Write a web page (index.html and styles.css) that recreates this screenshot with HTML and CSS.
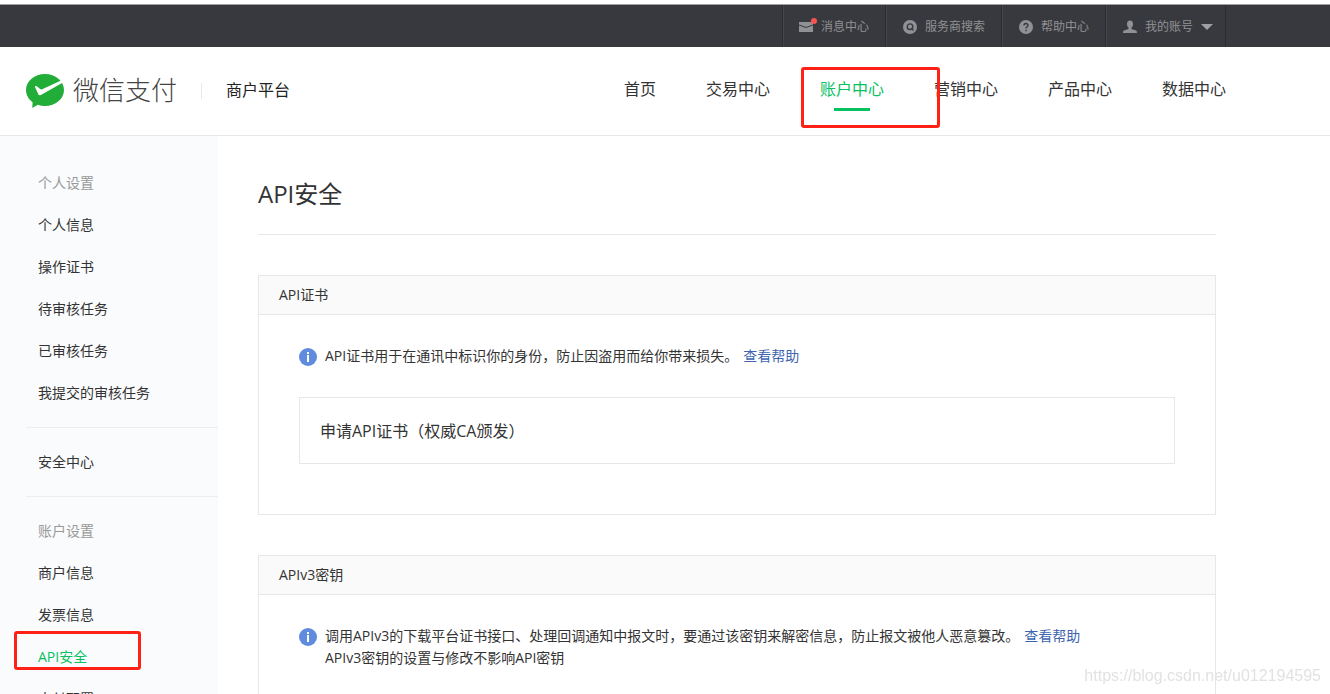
FILE: index.html
```html
<!DOCTYPE html>
<html lang="zh-CN">
<head>
<meta charset="utf-8">
<title>API安全 - 微信支付商户平台</title>
<link rel="stylesheet" href="styles.css">
</head>
<body>
<div class="topbar">
  <a class="topbar-item" href="#">
    <svg class="icon" viewBox="0 0 14 14"><path d="M0 2h14v2.500L7 7 0 4.500zM0 5.500L7 8l7-2.500V12H0z"/></svg>
    <span>消息中心</span><i class="dot"></i>
  </a>
  <a class="topbar-item" href="#">
    <svg class="icon" viewBox="0 0 14 14"><circle cx="7" cy="7" r="7"/><circle class="cut" cx="7" cy="6.700" r="2.800"/><path class="cut" d="M8.500 8.500l2 2"/></svg>
    <span>服务商搜索</span>
  </a>
  <a class="topbar-item" href="#">
    <svg class="icon" viewBox="0 0 14 14"><circle cx="7" cy="7" r="7"/><path class="cut" d="M5 5.500C5 2.900 9 2.900 9 5.300 9 6.700 7 6.700 7 8.600M7 9.800v1.400"/></svg>
    <span>帮助中心</span>
  </a>
  <button class="topbar-item" type="button">
    <svg class="icon" viewBox="0 0 14 14"><path d="M7 0.500C9 0.500 10 2 10 4c0 1.700-.600 3-1.500 3.800v1.200L13 10.600c.700.300 1 .900 1 2.400H0c0-1.500.300-2.100 1-2.400L5.500 9V7.800C4.600 7 4 5.700 4 4 4 2 5 .500 7 .500z"/></svg>
    <span>我的账号</span>
    <svg class="caret" viewBox="0 0 12 6"><path d="M0 0h12L6 6z"/></svg>
  </button>
</div>

<header class="header">
  <a class="brand" href="#">
    <svg class="logo" viewBox="0 0 38 34"><path fill="#22ac38" d="M19 0c10.500 0 19 7.100 19 16s-8.500 16-19 16c-2.600 0-5-.400-7.200-1.200L6.300 34l.300-5.700C2.500 25.300 0 20.900 0 16 0 7.100 8.500 0 19 0z"/><path fill="#fff" d="M8.800 12.600c.7-.9 1.600-.6 2.300 0l3.100 2.500c.6.400 1.300.5 2 .2L35 6.600l1.500 2.200L14.900 20.900c-1.100.7-2.100.5-2.600-.7z"/></svg>
    <span class="brand-name">微信支付</span>
  </a>
  <span class="platform">商户平台</span>
  <nav class="nav">
    <a href="#">首页</a>
    <a href="#">交易中心</a>
    <a class="active" href="#">账户中心<i class="mark"></i></a>
    <a href="#">营销中心</a>
    <a href="#">产品中心</a>
    <a href="#">数据中心</a>
  </nav>
</header>

<div class="page">
  <aside class="sidebar">
    <section class="group">
      <h2>个人设置</h2>
      <a href="#">个人信息</a>
      <a href="#">操作证书</a>
      <a href="#">待审核任务</a>
      <a href="#">已审核任务</a>
      <a href="#">我提交的审核任务</a>
    </section>
    <section class="group">
      <a href="#">安全中心</a>
    </section>
    <section class="group">
      <h2>账户设置</h2>
      <a href="#">商户信息</a>
      <a href="#">发票信息</a>
      <a class="active" href="#">API安全<i class="mark"></i></a>
      <a href="#">支付配置</a>
    </section>
  </aside>

  <main class="main">
    <h1>API安全</h1>
    <section class="card">
      <h2>API证书</h2>
      <div class="card-body">
        <div class="tip">
          <svg class="info" viewBox="0 0 18 18"><circle cx="9" cy="9" r="9"/><path d="M8 4h2v2H8zM8 7h2v7H8z"/></svg>
          <p>API证书用于在通讯中标识你的身份，防止因盗用而给你带来损失。<a href="#">查看帮助</a></p>
        </div>
        <div class="panel">申请API证书（权威CA颁发）</div>
      </div>
    </section>
    <section class="card">
      <h2>APIv3密钥</h2>
      <div class="card-body">
        <div class="tip">
          <svg class="info" viewBox="0 0 18 18"><circle cx="9" cy="9" r="9"/><path d="M8 4h2v2H8zM8 7h2v7H8z"/></svg>
          <p>调用APIv3的下载平台证书接口、处理回调通知中报文时，要通过该密钥来解密信息，防止报文被他人恶意篡改。<a href="#">查看帮助</a><br>APIv3密钥的设置与修改不影响API密钥</p>
        </div>
      </div>
    </section>
  </main>
</div>
<div class="watermark">https://blog.csdn.net/u012194595</div>
</body>
</html>
```
FILE: styles.css
```css
* { box-sizing: border-box; }
html { height: 100%; overflow: hidden; }
body {
  display: flex;
  flex-direction: column;
  height: 100%;
  margin: 0;
  padding-top: 4px;
  overflow: hidden;
  background: #fff;
  color: #333;
  font: 14px/22px "Open Sans", "Noto Sans CJK SC", sans-serif;
}
a { color: inherit; text-decoration: none; }
h1, h2, p { margin: 0; font-weight: 400; }

.topbar {
  display: flex;
  flex: none;
  justify-content: flex-end;
  height: 43px;
  padding-right: 104px;
  border-top: 1px solid #a0a0a1;
  background: #38393e;
}
.topbar-item {
  position: relative;
  display: flex;
  align-items: center;
  gap: 8px;
  padding: 2px 16px 0;
  border: 0;
  border-left: 1px solid #2b2c30;
  box-shadow: inset 1px 0 #45464b;
  background: none;
  color: #909194;
  font: inherit;
  font-size: 12px;
}
.topbar-item:last-child { padding-right: 12px; border-right: 1px solid #2b2c30; }
.topbar-item + .topbar-item { padding-left: 17px; }
.icon { width: 14px; height: 14px; fill: #909194; }
.cut { fill: none; stroke: #38393e; stroke-width: 1.400; }
.caret { width: 12px; height: 6px; fill: #a0a0a2; }
.dot {
  position: absolute;
  top: 13px;
  left: 28px;
  width: 6px;
  height: 6px;
  border-radius: 50%;
  background: #fa5151;
}

.header {
  display: flex;
  flex: none;
  align-items: center;
  height: 89px;
  padding: 0 104px 0 26px;
  border-bottom: 1px solid #e7e8eb;
  font-size: 16px;
}
.brand { display: flex; align-items: center; gap: 9px; }
.logo { width: 38px; height: 34px; }
.brand-name { padding-bottom: 2px; color: #444; font-size: 26px; font-weight: 300; line-height: 34px; }
.platform {
  margin-left: 24px;
  padding: 0 0 2px 25px;
  background: linear-gradient(#e7e8eb, #e7e8eb) left center / 1px 16px no-repeat;
  color: #222;
}
.nav { display: flex; gap: 50px; margin-left: auto; padding-bottom: 4px; }
.nav a { position: relative; white-space: nowrap; }
.active, .nav .active { color: #07c160; }
.nav .active::after {
  position: absolute;
  bottom: -11px;
  left: 14px;
  width: 36px;
  height: 3px;
  background: #07c160;
  content: "";
}
.mark {
  position: absolute;
  z-index: 2;
  border: 3px solid #ff2116;
  border-radius: 3px;
}
.nav .mark { top: -11px; left: -19px; width: 139px; height: 61px; }

.page { display: flex; flex: 1; min-height: 0; }
.sidebar {
  flex: none;
  width: 218px;
  padding: 26px 0 0 26px;
  background: #fafbfd;
}
.group { padding-bottom: 13px; }
.group + .group { padding-top: 13px; border-top: 1px solid #ebedf0; }
.group h2, .group a {
  position: relative;
  display: block;
  padding-left: 12px;
  font-size: 14px;
  line-height: 42px;
}
.group h2 { color: #999; }
.group .mark { top: -5px; left: -12px; width: 127px; height: 39px; }

.main { flex: 1; min-width: 0; padding: 38px 114px 0 40px; }
h1 {
  padding-bottom: 20px;
  border-bottom: 1px solid #e7e7eb;
  font-size: 24px;
  line-height: 40px;
}
.card { margin-top: 40px; border: 1px solid #e7e7eb; }
.card h2 {
  padding: 0 20px;
  border-bottom: 1px solid #e7e7eb;
  background: #fafafa;
  font-size: 14px;
  line-height: 38px;
}
.card-body { padding: 30px 40px 50px; }
.tip { display: flex; align-items: flex-start; gap: 8px; }
.info { flex: none; width: 18px; height: 18px; margin-top: 3px; fill: #5f8cdd; }
.info path { fill: #fff; }
.tip a { margin-left: 5px; color: #3e64b0; }
.panel {
  margin-top: 30px;
  padding: 21px 20px 19px;
  border: 1px solid #e7e7eb;
  font-size: 16px;
  line-height: 25px;
}
.watermark {
  position: fixed;
  right: 9px;
  bottom: 8px;
  color: #e2e2e2;
  font: 16px/20px "Liberation Sans", sans-serif;
}
```
